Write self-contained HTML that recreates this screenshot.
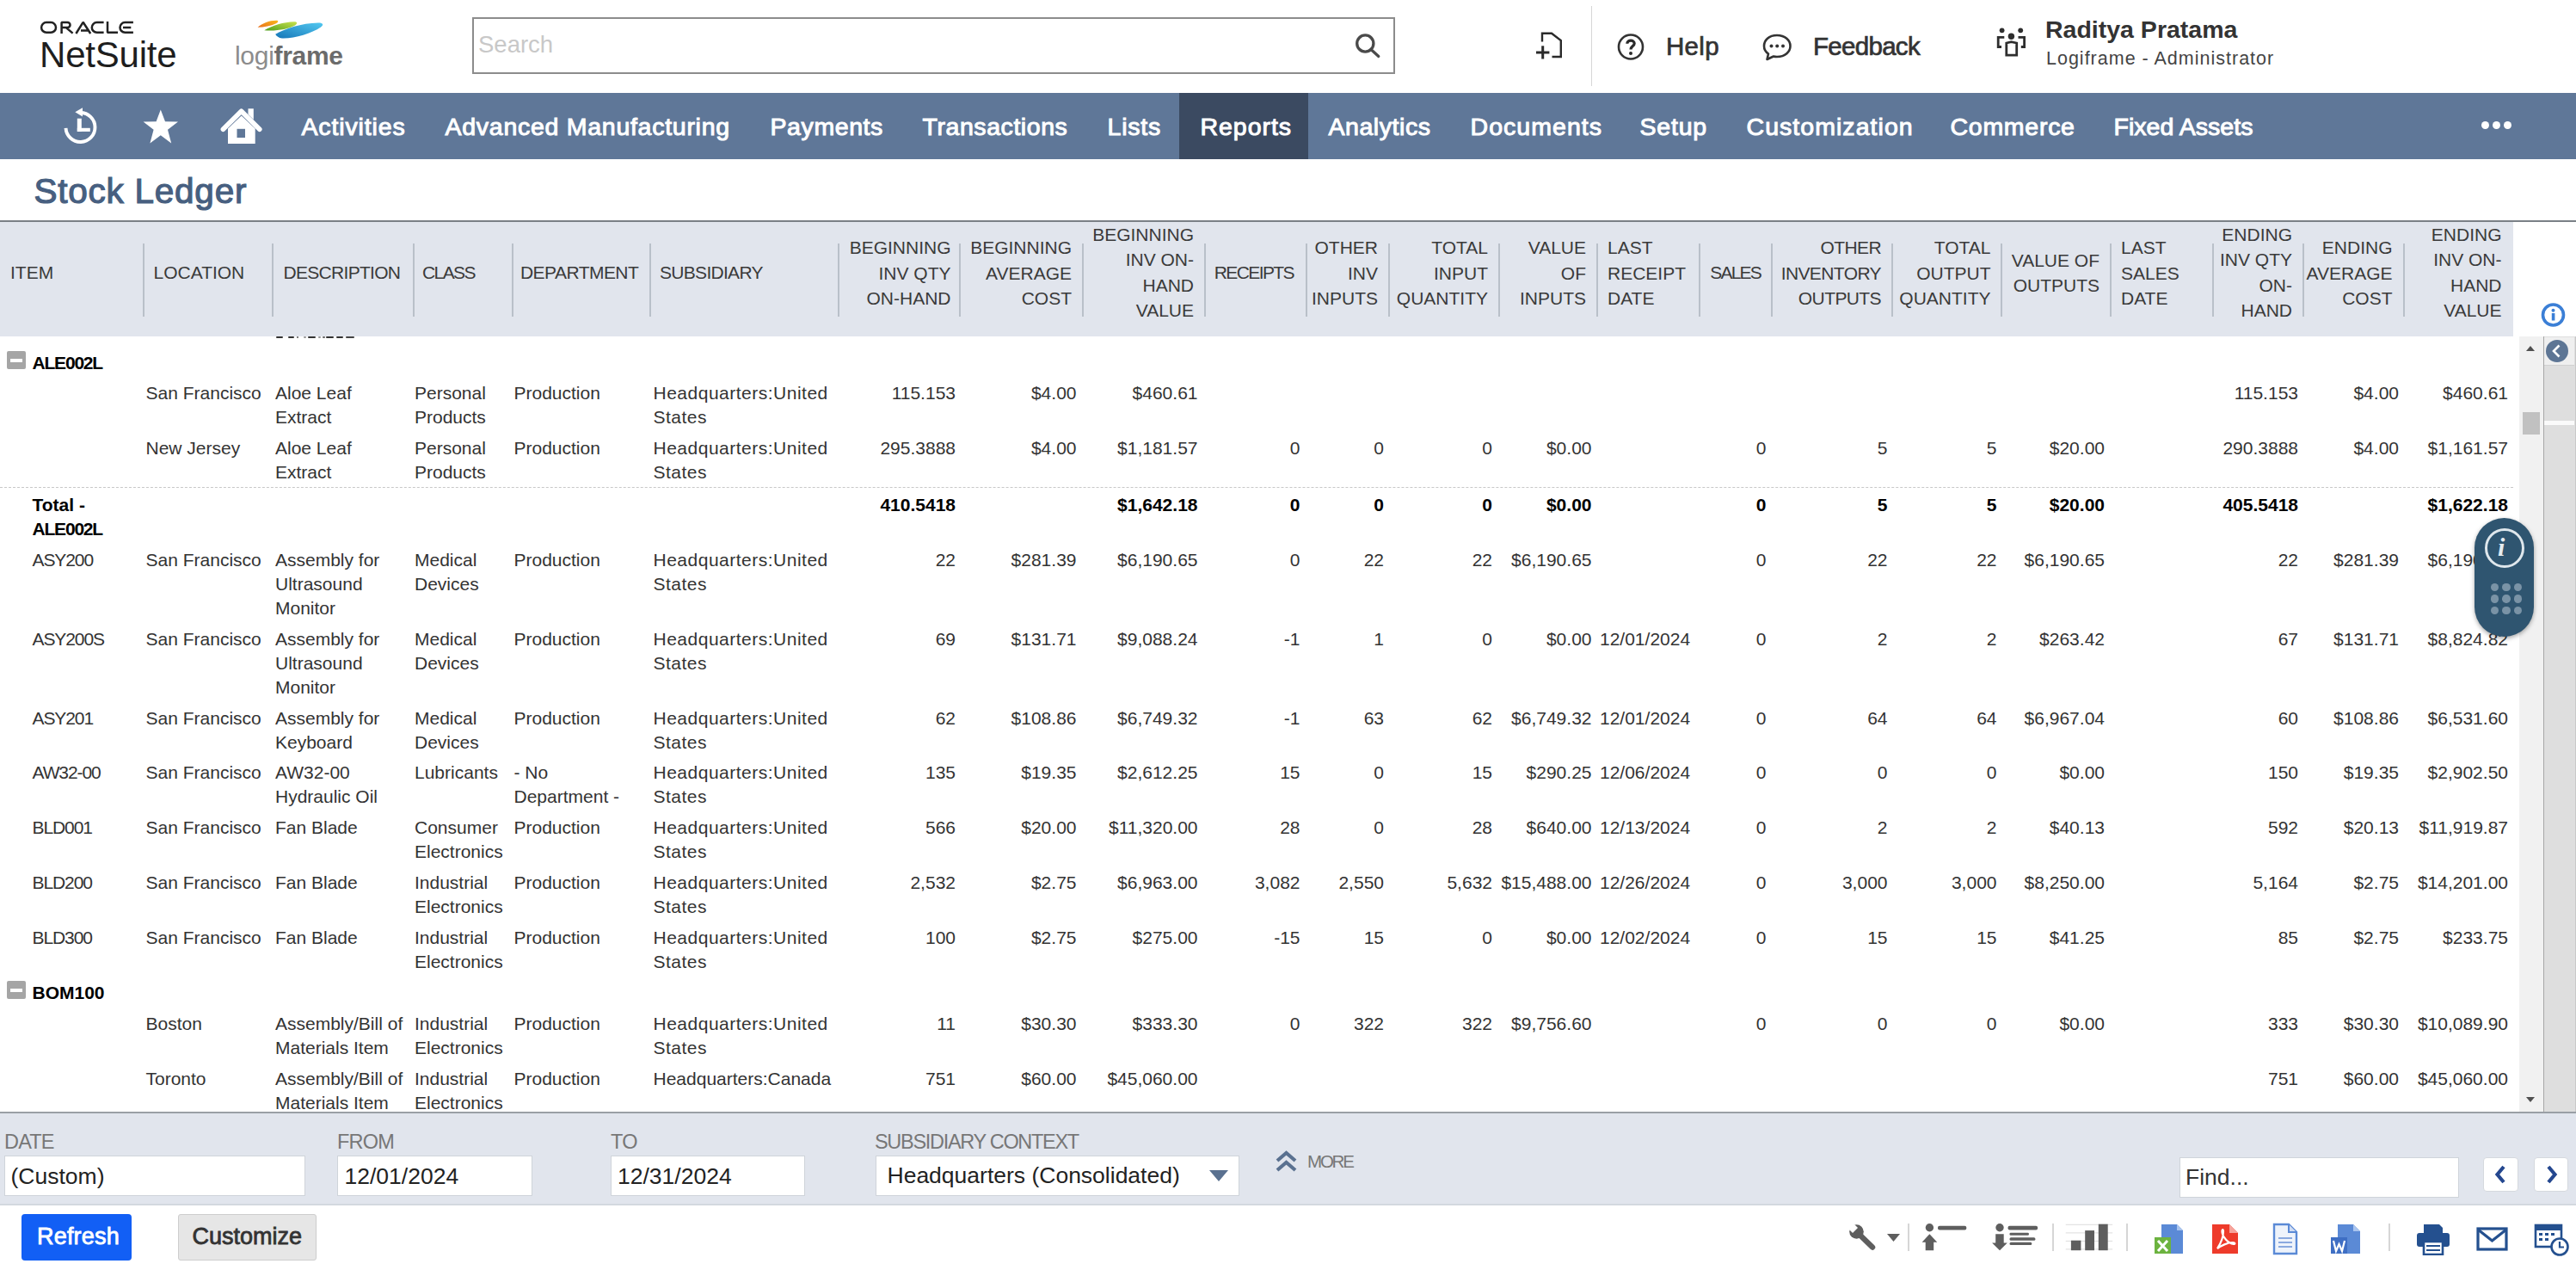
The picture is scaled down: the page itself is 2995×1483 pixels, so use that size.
<!DOCTYPE html>
<html><head><meta charset="utf-8"><style>html,body{margin:0;padding:0;}body{width:2995px;height:1483px;overflow:hidden;position:relative;background:#fff;}</style></head><body><svg style="position:absolute;left:46px;top:24px" width="112" height="17" viewBox="0 0 112 17">
<g fill="none" stroke="#222" stroke-width="2.5" stroke-linejoin="bevel">
<rect x="2.1" y="2.1" width="16.9" height="11.6" rx="5.8" ry="5.8"/>
<path d="M25.6 15 V2.1 H32.5 A3 3 0 0 1 32.5 8.1 H25.6 M30.8 8.1 L38.6 14.6"/>
<path d="M42.4 15 L50.6 1.8 L59.2 15 M48 11.6 H56.3"/>
<path d="M74.6 2.1 H66.6 A5.8 5.8 0 0 0 66.6 13.7 H74.6"/>
<path d="M79 1 V13.7 H91"/>
<path d="M108.9 2.1 H99.3 A5.8 5.8 0 0 0 99.3 13.7 H108.9 M97 7.9 H106.3"/>
</g>
</svg>
<div style="position:absolute;left:46px;top:36.34px;font:normal 42px/55px 'Liberation Sans', sans-serif;color:#1e1e1e;white-space:nowrap;letter-spacing:-0.2px;">NetSuite</div>
<svg style="position:absolute;left:290px;top:18px" width="90" height="30" viewBox="0 0 90 30">
<defs>
<linearGradient id="go" x1="0" y1="1" x2="1" y2="0"><stop offset="0" stop-color="#e8701f"/><stop offset="1" stop-color="#f9b71b"/></linearGradient>
<linearGradient id="gg" x1="0" y1="1" x2="1" y2="0"><stop offset="0" stop-color="#4f9e1c"/><stop offset="1" stop-color="#cbe24c"/></linearGradient>
<linearGradient id="gb" x1="0" y1="1" x2="1" y2="0"><stop offset="0" stop-color="#1676b8"/><stop offset="1" stop-color="#52c8f0"/></linearGradient>
</defs>
<path d="M9.6 13.8 C15 9 24 5.5 32 5.8 C34 6 33.5 8 31 9.2 C25 12 17 13.8 9.6 13.8 Z" fill="url(#go)"/>
<path d="M17.3 17.2 C26 12 40 7.5 52 7.3 C56 7.2 56 9.5 53 11.5 C45 16 30 18.5 17.3 17.2 Z" fill="url(#gg)"/>
<path d="M30.2 21.8 C42 15 60 9 80 8.5 C86 8.4 86.5 11 83 13.5 C72 21 52 27 38 26.5 C34 26.3 31.5 24 30.2 21.8 Z" fill="url(#gb)"/>
</svg>
<div style="position:absolute;left:273px;top:45.25px;font:bold 30px/39px 'Liberation Sans', sans-serif;color:#222;white-space:nowrap;letter-spacing:-0.3px"><span style="font-weight:normal;color:#8c8c8c">logi</span><span style="color:#6b6b6b">frame</span></div>
<div style="position:absolute;left:549px;top:20px;width:1072.5px;height:65.5px;box-sizing:border-box;border:2px solid #8c8c8c;background:#fff"></div>
<div style="position:absolute;left:556px;top:34.09px;font:normal 27.5px/36px 'Liberation Sans', sans-serif;color:#c8c8c8;white-space:nowrap;">Search</div>
<svg style="position:absolute;left:1574px;top:39px" width="32" height="31" viewBox="0 0 32 31">
<circle cx="13.3" cy="11.5" r="9.6" fill="none" stroke="#4a4a4a" stroke-width="3.3"/>
<line x1="20" y1="18.5" x2="28.8" y2="26.5" stroke="#4a4a4a" stroke-width="3.2" stroke-linecap="round"/>
</svg>
<svg style="position:absolute;left:1784px;top:37px" width="36" height="34" viewBox="0 0 36 34">
<path d="M9 11.5 V1.8 H20 L30.8 10 V29 H20.5" fill="none" stroke="#2a2a2a" stroke-width="2.4" stroke-linejoin="miter"/>
<line x1="2" y1="24" x2="17.4" y2="24" stroke="#2a2a2a" stroke-width="3"/>
<line x1="9.7" y1="16.3" x2="9.7" y2="31.5" stroke="#2a2a2a" stroke-width="3"/>
</svg>
<div style="position:absolute;left:1849.5px;top:7px;width:1.2px;height:93px;background:#d6d6d6"></div>
<svg style="position:absolute;left:1880px;top:39px" width="34" height="31" viewBox="0 0 34 31">
<circle cx="16" cy="15.5" r="14" fill="none" stroke="#333" stroke-width="2.6"/>
<path d="M11.8 11.8 C11.8 7 20.2 7 20.2 11.5 C20.2 14.5 16 14.5 16 18.5" fill="none" stroke="#2a2a2a" stroke-width="3.2"/>
<circle cx="16" cy="23" r="2" fill="#2a2a2a"/>
</svg>
<div style="position:absolute;left:1937px;top:35.37px;font:normal 29.5px/38px 'Liberation Sans', sans-serif;color:#333;white-space:nowrap;-webkit-text-stroke:0.7px #333;letter-spacing:0.3px">Help</div>
<svg style="position:absolute;left:2048px;top:38px" width="38" height="34" viewBox="0 0 38 34">
<path d="M18 3 C8.5 3 3 9 3 15.5 C3 19.5 5 22.5 8 24.5 L6.5 31 L14 27.5 C15.3 27.9 16.6 28 18 28 C27.5 28 33.5 22 33.5 15.5 C33.5 9 27.5 3 18 3 Z" fill="none" stroke="#333" stroke-width="2.6" stroke-linejoin="round"/>
<circle cx="11.5" cy="15.5" r="2" fill="#333"/><circle cx="18.2" cy="15.5" r="2" fill="#333"/><circle cx="25" cy="15.5" r="2" fill="#333"/>
</svg>
<div style="position:absolute;left:2108px;top:35.37px;font:normal 29.5px/38px 'Liberation Sans', sans-serif;color:#333;white-space:nowrap;-webkit-text-stroke:0.7px #333;letter-spacing:-0.7px">Feedback</div>
<svg style="position:absolute;left:2319px;top:31px" width="39" height="36" viewBox="0 0 39 36">
<circle cx="8.6" cy="4.3" r="2.9" fill="#2e2e2e"/><circle cx="30.2" cy="4.3" r="2.9" fill="#2e2e2e"/>
<circle cx="19.4" cy="11.3" r="3.7" fill="#2e2e2e"/>
<path d="M11.3 12.3 H4.2 V23.5 H8" fill="none" stroke="#2e2e2e" stroke-width="2.8"/>
<path d="M27.5 12.3 H34.6 V23.5 H30.8" fill="none" stroke="#2e2e2e" stroke-width="2.8"/>
<path d="M13.8 19 L19.4 17.6 L25.7 19 V33.2 H13.8 Z" fill="none" stroke="#2e2e2e" stroke-width="2.8"/>
</svg>
<div style="position:absolute;left:2378px;top:15.73px;font:bold 28.5px/37px 'Liberation Sans', sans-serif;color:#333;white-space:nowrap;">Raditya Pratama</div>
<div style="position:absolute;left:2379px;top:53.64px;font:normal 21.5px/28px 'Liberation Sans', sans-serif;color:#444;white-space:nowrap;letter-spacing:1px">Logiframe - Administrator</div>
<div style="position:absolute;left:0px;top:108px;width:2995px;height:77px;background:#5f7798"></div>
<div style="position:absolute;left:1371px;top:108px;width:150px;height:77px;background:#3b4a61"></div>
<svg style="position:absolute;left:72px;top:124px" width="44" height="46" viewBox="0 0 44 46">
<path d="M21.5 7 A17 17 0 1 1 4.5 24.9" fill="none" stroke="#fff" stroke-width="3.9"/>
<path d="M15.3 6.3 L24 1.2 L24 11.4 Z" fill="#fff"/>
<rect x="17.8" y="13.7" width="5" height="15.2" fill="#fff"/>
<rect x="17.8" y="24.8" width="15" height="4.1" fill="#fff"/>
</svg>
<svg style="position:absolute;left:166px;top:127px" width="42" height="41" viewBox="0 0 42 41">
<path d="M20.8 0.5 L26 14.3 L41 14.5 L29 23.8 L33.2 39.5 L20.8 30.3 L8.4 39.5 L12.6 23.8 L0.6 14.5 L15.6 14.3 Z" fill="#fff"/>
</svg>
<svg style="position:absolute;left:256px;top:124px" width="50" height="45" viewBox="0 0 50 45">
<path d="M32.5 2.2 H38.8 V15 L32.5 8.8 Z" fill="#fff"/>
<path d="M9 25.5 L24.7 10.5 L40.7 25.5 V43 H9 Z" fill="#fff"/>
<path d="M3.4 26.3 L24.6 5.3 L45.8 26.3" fill="none" stroke="#fff" stroke-width="5.6" stroke-linecap="round" stroke-linejoin="round"/>
<rect x="19.5" y="25.8" width="9.5" height="10.2" fill="#5f7798"/>
</svg>
<div style="position:absolute;left:350.5px;top:128.73px;font:normal 28.5px/37px 'Liberation Sans', sans-serif;color:#fff;white-space:nowrap;-webkit-text-stroke:1px #fff;letter-spacing:0.86px">Activities</div>
<div style="position:absolute;left:517.5px;top:128.73px;font:normal 28.5px/37px 'Liberation Sans', sans-serif;color:#fff;white-space:nowrap;-webkit-text-stroke:1px #fff;letter-spacing:0.73px">Advanced Manufacturing</div>
<div style="position:absolute;left:895.5px;top:128.73px;font:normal 28.5px/37px 'Liberation Sans', sans-serif;color:#fff;white-space:nowrap;-webkit-text-stroke:1px #fff;letter-spacing:0.59px">Payments</div>
<div style="position:absolute;left:1072.5px;top:128.73px;font:normal 28.5px/37px 'Liberation Sans', sans-serif;color:#fff;white-space:nowrap;-webkit-text-stroke:1px #fff;letter-spacing:0.57px">Transactions</div>
<div style="position:absolute;left:1287.5px;top:128.73px;font:normal 28.5px/37px 'Liberation Sans', sans-serif;color:#fff;white-space:nowrap;-webkit-text-stroke:1px #fff;letter-spacing:0.80px">Lists</div>
<div style="position:absolute;left:1395.5px;top:128.73px;font:normal 28.5px/37px 'Liberation Sans', sans-serif;color:#fff;white-space:nowrap;-webkit-text-stroke:1px #fff;letter-spacing:0.97px">Reports</div>
<div style="position:absolute;left:1544.5px;top:128.73px;font:normal 28.5px/37px 'Liberation Sans', sans-serif;color:#fff;white-space:nowrap;-webkit-text-stroke:1px #fff;letter-spacing:0.55px">Analytics</div>
<div style="position:absolute;left:1709.5px;top:128.73px;font:normal 28.5px/37px 'Liberation Sans', sans-serif;color:#fff;white-space:nowrap;-webkit-text-stroke:1px #fff;letter-spacing:1.05px">Documents</div>
<div style="position:absolute;left:1906.5px;top:128.73px;font:normal 28.5px/37px 'Liberation Sans', sans-serif;color:#fff;white-space:nowrap;-webkit-text-stroke:1px #fff;letter-spacing:0.80px">Setup</div>
<div style="position:absolute;left:2030.5px;top:128.73px;font:normal 28.5px/37px 'Liberation Sans', sans-serif;color:#fff;white-space:nowrap;-webkit-text-stroke:1px #fff;letter-spacing:1.05px">Customization</div>
<div style="position:absolute;left:2267.5px;top:128.73px;font:normal 28.5px/37px 'Liberation Sans', sans-serif;color:#fff;white-space:nowrap;-webkit-text-stroke:1px #fff;letter-spacing:0.73px">Commerce</div>
<div style="position:absolute;left:2457.5px;top:128.73px;font:normal 28.5px/37px 'Liberation Sans', sans-serif;color:#fff;white-space:nowrap;-webkit-text-stroke:1px #fff;letter-spacing:0.03px">Fixed Assets</div>
<div style="position:absolute;left:2885px;top:141px;width:9px;height:9px;border-radius:50%;background:#fff"></div>
<div style="position:absolute;left:2898px;top:141px;width:9px;height:9px;border-radius:50%;background:#fff"></div>
<div style="position:absolute;left:2911px;top:141px;width:9px;height:9px;border-radius:50%;background:#fff"></div>
<div style="position:absolute;left:39.5px;top:196.33px;font:normal 40.5px/53px 'Liberation Sans', sans-serif;color:#475f80;white-space:nowrap;-webkit-text-stroke:1.2px #475f80;letter-spacing:0.75px">Stock Ledger</div>
<div style="position:absolute;left:0px;top:255.5px;width:2995px;height:2px;background:#7a8086"></div>
<div style="position:absolute;left:0px;top:257.5px;width:2922px;height:133.5px;background:#e1e5ed"></div>
<div style="position:absolute;left:165.5px;top:282.5px;width:2px;height:85px;background:#b9c0c9"></div>
<div style="position:absolute;left:316px;top:282.5px;width:2px;height:85px;background:#b9c0c9"></div>
<div style="position:absolute;left:479.5px;top:282.5px;width:2px;height:85px;background:#b9c0c9"></div>
<div style="position:absolute;left:594.5px;top:282.5px;width:2px;height:85px;background:#b9c0c9"></div>
<div style="position:absolute;left:754.5px;top:282.5px;width:2px;height:85px;background:#b9c0c9"></div>
<div style="position:absolute;left:974px;top:282.5px;width:2px;height:85px;background:#b9c0c9"></div>
<div style="position:absolute;left:1114.5px;top:282.5px;width:2px;height:85px;background:#b9c0c9"></div>
<div style="position:absolute;left:1257.5px;top:282.5px;width:2px;height:85px;background:#b9c0c9"></div>
<div style="position:absolute;left:1400px;top:282.5px;width:2px;height:85px;background:#b9c0c9"></div>
<div style="position:absolute;left:1517.5px;top:282.5px;width:2px;height:85px;background:#b9c0c9"></div>
<div style="position:absolute;left:1613.5px;top:282.5px;width:2px;height:85px;background:#b9c0c9"></div>
<div style="position:absolute;left:1741.5px;top:282.5px;width:2px;height:85px;background:#b9c0c9"></div>
<div style="position:absolute;left:1855.5px;top:282.5px;width:2px;height:85px;background:#b9c0c9"></div>
<div style="position:absolute;left:1974.5px;top:282.5px;width:2px;height:85px;background:#b9c0c9"></div>
<div style="position:absolute;left:2058.5px;top:282.5px;width:2px;height:85px;background:#b9c0c9"></div>
<div style="position:absolute;left:2199px;top:282.5px;width:2px;height:85px;background:#b9c0c9"></div>
<div style="position:absolute;left:2326px;top:282.5px;width:2px;height:85px;background:#b9c0c9"></div>
<div style="position:absolute;left:2453px;top:282.5px;width:2px;height:85px;background:#b9c0c9"></div>
<div style="position:absolute;left:2571.5px;top:282.5px;width:2px;height:85px;background:#b9c0c9"></div>
<div style="position:absolute;left:2677px;top:282.5px;width:2px;height:85px;background:#b9c0c9"></div>
<div style="position:absolute;left:2794px;top:282.5px;width:2px;height:85px;background:#b9c0c9"></div>
<div style="position:absolute;left:12px;top:302.42px;font:normal 21px/29.5px 'Liberation Sans', sans-serif;color:#3a3a3a;white-space:nowrap;letter-spacing:0px">ITEM</div>
<div style="position:absolute;left:178.5px;top:302.42px;font:normal 21px/29.5px 'Liberation Sans', sans-serif;color:#3a3a3a;white-space:nowrap;letter-spacing:0px">LOCATION</div>
<div style="position:absolute;left:329.5px;top:302.42px;font:normal 21px/29.5px 'Liberation Sans', sans-serif;color:#3a3a3a;white-space:nowrap;letter-spacing:-0.7px">DESCRIPTION</div>
<div style="position:absolute;left:491px;top:302.42px;font:normal 21px/29.5px 'Liberation Sans', sans-serif;color:#3a3a3a;white-space:nowrap;letter-spacing:-1.6px">CLASS</div>
<div style="position:absolute;left:605px;top:302.42px;font:normal 21px/29.5px 'Liberation Sans', sans-serif;color:#3a3a3a;white-space:nowrap;letter-spacing:-0.55px">DEPARTMENT</div>
<div style="position:absolute;left:767px;top:302.42px;font:normal 21px/29.5px 'Liberation Sans', sans-serif;color:#3a3a3a;white-space:nowrap;letter-spacing:-0.7px">SUBSIDIARY</div>
<div style="position:absolute;right:1889.5px;text-align:right;top:273.42px;font:normal 21px/29.5px 'Liberation Sans', sans-serif;color:#3a3a3a;white-space:nowrap;letter-spacing:0px">BEGINNING<br>INV QTY<br>ON-HAND</div>
<div style="position:absolute;right:1749px;text-align:right;top:273.42px;font:normal 21px/29.5px 'Liberation Sans', sans-serif;color:#3a3a3a;white-space:nowrap;letter-spacing:0px">BEGINNING<br>AVERAGE<br>COST</div>
<div style="position:absolute;right:1607px;text-align:right;top:257.92px;font:normal 21px/29.5px 'Liberation Sans', sans-serif;color:#3a3a3a;white-space:nowrap;letter-spacing:0px">BEGINNING<br>INV ON-<br>HAND<br>VALUE</div>
<div style="position:absolute;right:1491px;text-align:right;top:302.42px;font:normal 21px/29.5px 'Liberation Sans', sans-serif;color:#3a3a3a;white-space:nowrap;letter-spacing:-1.6px">RECEIPTS</div>
<div style="position:absolute;right:1393px;text-align:right;top:273.42px;font:normal 21px/29.5px 'Liberation Sans', sans-serif;color:#3a3a3a;white-space:nowrap;letter-spacing:0px">OTHER<br>INV<br>INPUTS</div>
<div style="position:absolute;right:1265px;text-align:right;top:273.42px;font:normal 21px/29.5px 'Liberation Sans', sans-serif;color:#3a3a3a;white-space:nowrap;letter-spacing:0px">TOTAL<br>INPUT<br>QUANTITY</div>
<div style="position:absolute;right:1151px;text-align:right;top:273.42px;font:normal 21px/29.5px 'Liberation Sans', sans-serif;color:#3a3a3a;white-space:nowrap;letter-spacing:0px">VALUE<br>OF<br>INPUTS</div>
<div style="position:absolute;left:1869px;top:273.42px;font:normal 21px/29.5px 'Liberation Sans', sans-serif;color:#3a3a3a;white-space:nowrap;letter-spacing:0px">LAST<br>RECEIPT<br>DATE</div>
<div style="position:absolute;right:948px;text-align:right;top:302.42px;font:normal 21px/29.5px 'Liberation Sans', sans-serif;color:#3a3a3a;white-space:nowrap;letter-spacing:-1.8px">SALES</div>
<div style="position:absolute;right:808px;text-align:right;top:273.42px;font:normal 21px/29.5px 'Liberation Sans', sans-serif;color:#3a3a3a;white-space:nowrap;letter-spacing:-0.6px">OTHER<br>INVENTORY<br>OUTPUTS</div>
<div style="position:absolute;right:680.5px;text-align:right;top:273.42px;font:normal 21px/29.5px 'Liberation Sans', sans-serif;color:#3a3a3a;white-space:nowrap;letter-spacing:0px">TOTAL<br>OUTPUT<br>QUANTITY</div>
<div style="position:absolute;right:554px;text-align:right;top:287.92px;font:normal 21px/29.5px 'Liberation Sans', sans-serif;color:#3a3a3a;white-space:nowrap;letter-spacing:0px">VALUE OF<br>OUTPUTS</div>
<div style="position:absolute;left:2466px;top:273.42px;font:normal 21px/29.5px 'Liberation Sans', sans-serif;color:#3a3a3a;white-space:nowrap;letter-spacing:0px">LAST<br>SALES<br>DATE</div>
<div style="position:absolute;right:330px;text-align:right;top:257.92px;font:normal 21px/29.5px 'Liberation Sans', sans-serif;color:#3a3a3a;white-space:nowrap;letter-spacing:0px">ENDING<br>INV QTY<br>ON-<br>HAND</div>
<div style="position:absolute;right:213.5px;text-align:right;top:273.42px;font:normal 21px/29.5px 'Liberation Sans', sans-serif;color:#3a3a3a;white-space:nowrap;letter-spacing:0px">ENDING<br>AVERAGE<br>COST</div>
<div style="position:absolute;right:86.5px;text-align:right;top:257.92px;font:normal 21px/29.5px 'Liberation Sans', sans-serif;color:#3a3a3a;white-space:nowrap;letter-spacing:0px">ENDING<br>INV ON-<br>HAND<br>VALUE</div>
<div style="position:absolute;left:0;top:391px;width:2929px;height:901px;overflow:hidden">
<div style="position:absolute;left:169.5px;top:52.17px;font:normal 21px/28px 'Liberation Sans', sans-serif;color:#333333;white-space:nowrap;letter-spacing:0px">San Francisco</div>
<div style="position:absolute;left:320px;top:52.17px;font:normal 21px/28px 'Liberation Sans', sans-serif;color:#333333;white-space:nowrap;letter-spacing:0px">Aloe Leaf<br>Extract</div>
<div style="position:absolute;left:482px;top:52.17px;font:normal 21px/28px 'Liberation Sans', sans-serif;color:#333333;white-space:nowrap;letter-spacing:0px">Personal<br>Products</div>
<div style="position:absolute;left:597.5px;top:52.17px;font:normal 21px/28px 'Liberation Sans', sans-serif;color:#333333;white-space:nowrap;letter-spacing:0px">Production</div>
<div style="position:absolute;left:759.5px;top:52.17px;font:normal 21px/28px 'Liberation Sans', sans-serif;color:#333333;white-space:nowrap;letter-spacing:0.5px">Headquarters:United<br>States</div>
<div style="position:absolute;right:1818px;text-align:right;top:52.17px;font:normal 21px/28px 'Liberation Sans', sans-serif;color:#333333;white-space:nowrap;letter-spacing:0px">115.153</div>
<div style="position:absolute;right:1677.5px;text-align:right;top:52.17px;font:normal 21px/28px 'Liberation Sans', sans-serif;color:#333333;white-space:nowrap;letter-spacing:0px">$4.00</div>
<div style="position:absolute;right:1536.5px;text-align:right;top:52.17px;font:normal 21px/28px 'Liberation Sans', sans-serif;color:#333333;white-space:nowrap;letter-spacing:0px">$460.61</div>
<div style="position:absolute;right:257px;text-align:right;top:52.17px;font:normal 21px/28px 'Liberation Sans', sans-serif;color:#333333;white-space:nowrap;letter-spacing:0px">115.153</div>
<div style="position:absolute;right:140px;text-align:right;top:52.17px;font:normal 21px/28px 'Liberation Sans', sans-serif;color:#333333;white-space:nowrap;letter-spacing:0px">$4.00</div>
<div style="position:absolute;right:13px;text-align:right;top:52.17px;font:normal 21px/28px 'Liberation Sans', sans-serif;color:#333333;white-space:nowrap;letter-spacing:0px">$460.61</div>
<div style="position:absolute;left:169.5px;top:116.17px;font:normal 21px/28px 'Liberation Sans', sans-serif;color:#333333;white-space:nowrap;letter-spacing:0px">New Jersey</div>
<div style="position:absolute;left:320px;top:116.17px;font:normal 21px/28px 'Liberation Sans', sans-serif;color:#333333;white-space:nowrap;letter-spacing:0px">Aloe Leaf<br>Extract</div>
<div style="position:absolute;left:482px;top:116.17px;font:normal 21px/28px 'Liberation Sans', sans-serif;color:#333333;white-space:nowrap;letter-spacing:0px">Personal<br>Products</div>
<div style="position:absolute;left:597.5px;top:116.17px;font:normal 21px/28px 'Liberation Sans', sans-serif;color:#333333;white-space:nowrap;letter-spacing:0px">Production</div>
<div style="position:absolute;left:759.5px;top:116.17px;font:normal 21px/28px 'Liberation Sans', sans-serif;color:#333333;white-space:nowrap;letter-spacing:0.5px">Headquarters:United<br>States</div>
<div style="position:absolute;right:1818px;text-align:right;top:116.17px;font:normal 21px/28px 'Liberation Sans', sans-serif;color:#333333;white-space:nowrap;letter-spacing:0px">295.3888</div>
<div style="position:absolute;right:1677.5px;text-align:right;top:116.17px;font:normal 21px/28px 'Liberation Sans', sans-serif;color:#333333;white-space:nowrap;letter-spacing:0px">$4.00</div>
<div style="position:absolute;right:1536.5px;text-align:right;top:116.17px;font:normal 21px/28px 'Liberation Sans', sans-serif;color:#333333;white-space:nowrap;letter-spacing:0px">$1,181.57</div>
<div style="position:absolute;right:1417.5px;text-align:right;top:116.17px;font:normal 21px/28px 'Liberation Sans', sans-serif;color:#333333;white-space:nowrap;letter-spacing:0px">0</div>
<div style="position:absolute;right:1320px;text-align:right;top:116.17px;font:normal 21px/28px 'Liberation Sans', sans-serif;color:#333333;white-space:nowrap;letter-spacing:0px">0</div>
<div style="position:absolute;right:1194px;text-align:right;top:116.17px;font:normal 21px/28px 'Liberation Sans', sans-serif;color:#333333;white-space:nowrap;letter-spacing:0px">0</div>
<div style="position:absolute;right:1078.5px;text-align:right;top:116.17px;font:normal 21px/28px 'Liberation Sans', sans-serif;color:#333333;white-space:nowrap;letter-spacing:0px">$0.00</div>
<div style="position:absolute;right:875.5px;text-align:right;top:116.17px;font:normal 21px/28px 'Liberation Sans', sans-serif;color:#333333;white-space:nowrap;letter-spacing:0px">0</div>
<div style="position:absolute;right:734.5px;text-align:right;top:116.17px;font:normal 21px/28px 'Liberation Sans', sans-serif;color:#333333;white-space:nowrap;letter-spacing:0px">5</div>
<div style="position:absolute;right:607.5px;text-align:right;top:116.17px;font:normal 21px/28px 'Liberation Sans', sans-serif;color:#333333;white-space:nowrap;letter-spacing:0px">5</div>
<div style="position:absolute;right:482px;text-align:right;top:116.17px;font:normal 21px/28px 'Liberation Sans', sans-serif;color:#333333;white-space:nowrap;letter-spacing:0px">$20.00</div>
<div style="position:absolute;right:257px;text-align:right;top:116.17px;font:normal 21px/28px 'Liberation Sans', sans-serif;color:#333333;white-space:nowrap;letter-spacing:0px">290.3888</div>
<div style="position:absolute;right:140px;text-align:right;top:116.17px;font:normal 21px/28px 'Liberation Sans', sans-serif;color:#333333;white-space:nowrap;letter-spacing:0px">$4.00</div>
<div style="position:absolute;right:13px;text-align:right;top:116.17px;font:normal 21px/28px 'Liberation Sans', sans-serif;color:#333333;white-space:nowrap;letter-spacing:0px">$1,161.57</div>
<div style="position:absolute;left:37.5px;top:246.17px;font:normal 21px/28px 'Liberation Sans', sans-serif;color:#333333;white-space:nowrap;letter-spacing:-1.1px">ASY200</div>
<div style="position:absolute;left:169.5px;top:246.17px;font:normal 21px/28px 'Liberation Sans', sans-serif;color:#333333;white-space:nowrap;letter-spacing:0px">San Francisco</div>
<div style="position:absolute;left:320px;top:246.17px;font:normal 21px/28px 'Liberation Sans', sans-serif;color:#333333;white-space:nowrap;letter-spacing:0px">Assembly for<br>Ultrasound<br>Monitor</div>
<div style="position:absolute;left:482px;top:246.17px;font:normal 21px/28px 'Liberation Sans', sans-serif;color:#333333;white-space:nowrap;letter-spacing:0px">Medical<br>Devices</div>
<div style="position:absolute;left:597.5px;top:246.17px;font:normal 21px/28px 'Liberation Sans', sans-serif;color:#333333;white-space:nowrap;letter-spacing:0px">Production</div>
<div style="position:absolute;left:759.5px;top:246.17px;font:normal 21px/28px 'Liberation Sans', sans-serif;color:#333333;white-space:nowrap;letter-spacing:0.5px">Headquarters:United<br>States</div>
<div style="position:absolute;right:1818px;text-align:right;top:246.17px;font:normal 21px/28px 'Liberation Sans', sans-serif;color:#333333;white-space:nowrap;letter-spacing:0px">22</div>
<div style="position:absolute;right:1677.5px;text-align:right;top:246.17px;font:normal 21px/28px 'Liberation Sans', sans-serif;color:#333333;white-space:nowrap;letter-spacing:0px">$281.39</div>
<div style="position:absolute;right:1536.5px;text-align:right;top:246.17px;font:normal 21px/28px 'Liberation Sans', sans-serif;color:#333333;white-space:nowrap;letter-spacing:0px">$6,190.65</div>
<div style="position:absolute;right:1417.5px;text-align:right;top:246.17px;font:normal 21px/28px 'Liberation Sans', sans-serif;color:#333333;white-space:nowrap;letter-spacing:0px">0</div>
<div style="position:absolute;right:1320px;text-align:right;top:246.17px;font:normal 21px/28px 'Liberation Sans', sans-serif;color:#333333;white-space:nowrap;letter-spacing:0px">22</div>
<div style="position:absolute;right:1194px;text-align:right;top:246.17px;font:normal 21px/28px 'Liberation Sans', sans-serif;color:#333333;white-space:nowrap;letter-spacing:0px">22</div>
<div style="position:absolute;right:1078.5px;text-align:right;top:246.17px;font:normal 21px/28px 'Liberation Sans', sans-serif;color:#333333;white-space:nowrap;letter-spacing:0px">$6,190.65</div>
<div style="position:absolute;right:875.5px;text-align:right;top:246.17px;font:normal 21px/28px 'Liberation Sans', sans-serif;color:#333333;white-space:nowrap;letter-spacing:0px">0</div>
<div style="position:absolute;right:734.5px;text-align:right;top:246.17px;font:normal 21px/28px 'Liberation Sans', sans-serif;color:#333333;white-space:nowrap;letter-spacing:0px">22</div>
<div style="position:absolute;right:607.5px;text-align:right;top:246.17px;font:normal 21px/28px 'Liberation Sans', sans-serif;color:#333333;white-space:nowrap;letter-spacing:0px">22</div>
<div style="position:absolute;right:482px;text-align:right;top:246.17px;font:normal 21px/28px 'Liberation Sans', sans-serif;color:#333333;white-space:nowrap;letter-spacing:0px">$6,190.65</div>
<div style="position:absolute;right:257px;text-align:right;top:246.17px;font:normal 21px/28px 'Liberation Sans', sans-serif;color:#333333;white-space:nowrap;letter-spacing:0px">22</div>
<div style="position:absolute;right:140px;text-align:right;top:246.17px;font:normal 21px/28px 'Liberation Sans', sans-serif;color:#333333;white-space:nowrap;letter-spacing:0px">$281.39</div>
<div style="position:absolute;right:13px;text-align:right;top:246.17px;font:normal 21px/28px 'Liberation Sans', sans-serif;color:#333333;white-space:nowrap;letter-spacing:0px">$6,190.65</div>
<div style="position:absolute;left:37.5px;top:338.17px;font:normal 21px/28px 'Liberation Sans', sans-serif;color:#333333;white-space:nowrap;letter-spacing:-1.1px">ASY200S</div>
<div style="position:absolute;left:169.5px;top:338.17px;font:normal 21px/28px 'Liberation Sans', sans-serif;color:#333333;white-space:nowrap;letter-spacing:0px">San Francisco</div>
<div style="position:absolute;left:320px;top:338.17px;font:normal 21px/28px 'Liberation Sans', sans-serif;color:#333333;white-space:nowrap;letter-spacing:0px">Assembly for<br>Ultrasound<br>Monitor</div>
<div style="position:absolute;left:482px;top:338.17px;font:normal 21px/28px 'Liberation Sans', sans-serif;color:#333333;white-space:nowrap;letter-spacing:0px">Medical<br>Devices</div>
<div style="position:absolute;left:597.5px;top:338.17px;font:normal 21px/28px 'Liberation Sans', sans-serif;color:#333333;white-space:nowrap;letter-spacing:0px">Production</div>
<div style="position:absolute;left:759.5px;top:338.17px;font:normal 21px/28px 'Liberation Sans', sans-serif;color:#333333;white-space:nowrap;letter-spacing:0.5px">Headquarters:United<br>States</div>
<div style="position:absolute;right:1818px;text-align:right;top:338.17px;font:normal 21px/28px 'Liberation Sans', sans-serif;color:#333333;white-space:nowrap;letter-spacing:0px">69</div>
<div style="position:absolute;right:1677.5px;text-align:right;top:338.17px;font:normal 21px/28px 'Liberation Sans', sans-serif;color:#333333;white-space:nowrap;letter-spacing:0px">$131.71</div>
<div style="position:absolute;right:1536.5px;text-align:right;top:338.17px;font:normal 21px/28px 'Liberation Sans', sans-serif;color:#333333;white-space:nowrap;letter-spacing:0px">$9,088.24</div>
<div style="position:absolute;right:1417.5px;text-align:right;top:338.17px;font:normal 21px/28px 'Liberation Sans', sans-serif;color:#333333;white-space:nowrap;letter-spacing:0px">-1</div>
<div style="position:absolute;right:1320px;text-align:right;top:338.17px;font:normal 21px/28px 'Liberation Sans', sans-serif;color:#333333;white-space:nowrap;letter-spacing:0px">1</div>
<div style="position:absolute;right:1194px;text-align:right;top:338.17px;font:normal 21px/28px 'Liberation Sans', sans-serif;color:#333333;white-space:nowrap;letter-spacing:0px">0</div>
<div style="position:absolute;right:1078.5px;text-align:right;top:338.17px;font:normal 21px/28px 'Liberation Sans', sans-serif;color:#333333;white-space:nowrap;letter-spacing:0px">$0.00</div>
<div style="position:absolute;left:1860px;top:338.17px;font:normal 21px/28px 'Liberation Sans', sans-serif;color:#333333;white-space:nowrap;letter-spacing:0px">12/01/2024</div>
<div style="position:absolute;right:875.5px;text-align:right;top:338.17px;font:normal 21px/28px 'Liberation Sans', sans-serif;color:#333333;white-space:nowrap;letter-spacing:0px">0</div>
<div style="position:absolute;right:734.5px;text-align:right;top:338.17px;font:normal 21px/28px 'Liberation Sans', sans-serif;color:#333333;white-space:nowrap;letter-spacing:0px">2</div>
<div style="position:absolute;right:607.5px;text-align:right;top:338.17px;font:normal 21px/28px 'Liberation Sans', sans-serif;color:#333333;white-space:nowrap;letter-spacing:0px">2</div>
<div style="position:absolute;right:482px;text-align:right;top:338.17px;font:normal 21px/28px 'Liberation Sans', sans-serif;color:#333333;white-space:nowrap;letter-spacing:0px">$263.42</div>
<div style="position:absolute;right:257px;text-align:right;top:338.17px;font:normal 21px/28px 'Liberation Sans', sans-serif;color:#333333;white-space:nowrap;letter-spacing:0px">67</div>
<div style="position:absolute;right:140px;text-align:right;top:338.17px;font:normal 21px/28px 'Liberation Sans', sans-serif;color:#333333;white-space:nowrap;letter-spacing:0px">$131.71</div>
<div style="position:absolute;right:13px;text-align:right;top:338.17px;font:normal 21px/28px 'Liberation Sans', sans-serif;color:#333333;white-space:nowrap;letter-spacing:0px">$8,824.82</div>
<div style="position:absolute;left:37.5px;top:429.67px;font:normal 21px/28px 'Liberation Sans', sans-serif;color:#333333;white-space:nowrap;letter-spacing:-1.1px">ASY201</div>
<div style="position:absolute;left:169.5px;top:429.67px;font:normal 21px/28px 'Liberation Sans', sans-serif;color:#333333;white-space:nowrap;letter-spacing:0px">San Francisco</div>
<div style="position:absolute;left:320px;top:429.67px;font:normal 21px/28px 'Liberation Sans', sans-serif;color:#333333;white-space:nowrap;letter-spacing:0px">Assembly for<br>Keyboard</div>
<div style="position:absolute;left:482px;top:429.67px;font:normal 21px/28px 'Liberation Sans', sans-serif;color:#333333;white-space:nowrap;letter-spacing:0px">Medical<br>Devices</div>
<div style="position:absolute;left:597.5px;top:429.67px;font:normal 21px/28px 'Liberation Sans', sans-serif;color:#333333;white-space:nowrap;letter-spacing:0px">Production</div>
<div style="position:absolute;left:759.5px;top:429.67px;font:normal 21px/28px 'Liberation Sans', sans-serif;color:#333333;white-space:nowrap;letter-spacing:0.5px">Headquarters:United<br>States</div>
<div style="position:absolute;right:1818px;text-align:right;top:429.67px;font:normal 21px/28px 'Liberation Sans', sans-serif;color:#333333;white-space:nowrap;letter-spacing:0px">62</div>
<div style="position:absolute;right:1677.5px;text-align:right;top:429.67px;font:normal 21px/28px 'Liberation Sans', sans-serif;color:#333333;white-space:nowrap;letter-spacing:0px">$108.86</div>
<div style="position:absolute;right:1536.5px;text-align:right;top:429.67px;font:normal 21px/28px 'Liberation Sans', sans-serif;color:#333333;white-space:nowrap;letter-spacing:0px">$6,749.32</div>
<div style="position:absolute;right:1417.5px;text-align:right;top:429.67px;font:normal 21px/28px 'Liberation Sans', sans-serif;color:#333333;white-space:nowrap;letter-spacing:0px">-1</div>
<div style="position:absolute;right:1320px;text-align:right;top:429.67px;font:normal 21px/28px 'Liberation Sans', sans-serif;color:#333333;white-space:nowrap;letter-spacing:0px">63</div>
<div style="position:absolute;right:1194px;text-align:right;top:429.67px;font:normal 21px/28px 'Liberation Sans', sans-serif;color:#333333;white-space:nowrap;letter-spacing:0px">62</div>
<div style="position:absolute;right:1078.5px;text-align:right;top:429.67px;font:normal 21px/28px 'Liberation Sans', sans-serif;color:#333333;white-space:nowrap;letter-spacing:0px">$6,749.32</div>
<div style="position:absolute;left:1860px;top:429.67px;font:normal 21px/28px 'Liberation Sans', sans-serif;color:#333333;white-space:nowrap;letter-spacing:0px">12/01/2024</div>
<div style="position:absolute;right:875.5px;text-align:right;top:429.67px;font:normal 21px/28px 'Liberation Sans', sans-serif;color:#333333;white-space:nowrap;letter-spacing:0px">0</div>
<div style="position:absolute;right:734.5px;text-align:right;top:429.67px;font:normal 21px/28px 'Liberation Sans', sans-serif;color:#333333;white-space:nowrap;letter-spacing:0px">64</div>
<div style="position:absolute;right:607.5px;text-align:right;top:429.67px;font:normal 21px/28px 'Liberation Sans', sans-serif;color:#333333;white-space:nowrap;letter-spacing:0px">64</div>
<div style="position:absolute;right:482px;text-align:right;top:429.67px;font:normal 21px/28px 'Liberation Sans', sans-serif;color:#333333;white-space:nowrap;letter-spacing:0px">$6,967.04</div>
<div style="position:absolute;right:257px;text-align:right;top:429.67px;font:normal 21px/28px 'Liberation Sans', sans-serif;color:#333333;white-space:nowrap;letter-spacing:0px">60</div>
<div style="position:absolute;right:140px;text-align:right;top:429.67px;font:normal 21px/28px 'Liberation Sans', sans-serif;color:#333333;white-space:nowrap;letter-spacing:0px">$108.86</div>
<div style="position:absolute;right:13px;text-align:right;top:429.67px;font:normal 21px/28px 'Liberation Sans', sans-serif;color:#333333;white-space:nowrap;letter-spacing:0px">$6,531.60</div>
<div style="position:absolute;left:37.5px;top:493.17px;font:normal 21px/28px 'Liberation Sans', sans-serif;color:#333333;white-space:nowrap;letter-spacing:-1.1px">AW32-00</div>
<div style="position:absolute;left:169.5px;top:493.17px;font:normal 21px/28px 'Liberation Sans', sans-serif;color:#333333;white-space:nowrap;letter-spacing:0px">San Francisco</div>
<div style="position:absolute;left:320px;top:493.17px;font:normal 21px/28px 'Liberation Sans', sans-serif;color:#333333;white-space:nowrap;letter-spacing:0px">AW32-00<br>Hydraulic Oil</div>
<div style="position:absolute;left:482px;top:493.17px;font:normal 21px/28px 'Liberation Sans', sans-serif;color:#333333;white-space:nowrap;letter-spacing:0px">Lubricants</div>
<div style="position:absolute;left:597.5px;top:493.17px;font:normal 21px/28px 'Liberation Sans', sans-serif;color:#333333;white-space:nowrap;letter-spacing:0px">- No<br>Department -</div>
<div style="position:absolute;left:759.5px;top:493.17px;font:normal 21px/28px 'Liberation Sans', sans-serif;color:#333333;white-space:nowrap;letter-spacing:0.5px">Headquarters:United<br>States</div>
<div style="position:absolute;right:1818px;text-align:right;top:493.17px;font:normal 21px/28px 'Liberation Sans', sans-serif;color:#333333;white-space:nowrap;letter-spacing:0px">135</div>
<div style="position:absolute;right:1677.5px;text-align:right;top:493.17px;font:normal 21px/28px 'Liberation Sans', sans-serif;color:#333333;white-space:nowrap;letter-spacing:0px">$19.35</div>
<div style="position:absolute;right:1536.5px;text-align:right;top:493.17px;font:normal 21px/28px 'Liberation Sans', sans-serif;color:#333333;white-space:nowrap;letter-spacing:0px">$2,612.25</div>
<div style="position:absolute;right:1417.5px;text-align:right;top:493.17px;font:normal 21px/28px 'Liberation Sans', sans-serif;color:#333333;white-space:nowrap;letter-spacing:0px">15</div>
<div style="position:absolute;right:1320px;text-align:right;top:493.17px;font:normal 21px/28px 'Liberation Sans', sans-serif;color:#333333;white-space:nowrap;letter-spacing:0px">0</div>
<div style="position:absolute;right:1194px;text-align:right;top:493.17px;font:normal 21px/28px 'Liberation Sans', sans-serif;color:#333333;white-space:nowrap;letter-spacing:0px">15</div>
<div style="position:absolute;right:1078.5px;text-align:right;top:493.17px;font:normal 21px/28px 'Liberation Sans', sans-serif;color:#333333;white-space:nowrap;letter-spacing:0px">$290.25</div>
<div style="position:absolute;left:1860px;top:493.17px;font:normal 21px/28px 'Liberation Sans', sans-serif;color:#333333;white-space:nowrap;letter-spacing:0px">12/06/2024</div>
<div style="position:absolute;right:875.5px;text-align:right;top:493.17px;font:normal 21px/28px 'Liberation Sans', sans-serif;color:#333333;white-space:nowrap;letter-spacing:0px">0</div>
<div style="position:absolute;right:734.5px;text-align:right;top:493.17px;font:normal 21px/28px 'Liberation Sans', sans-serif;color:#333333;white-space:nowrap;letter-spacing:0px">0</div>
<div style="position:absolute;right:607.5px;text-align:right;top:493.17px;font:normal 21px/28px 'Liberation Sans', sans-serif;color:#333333;white-space:nowrap;letter-spacing:0px">0</div>
<div style="position:absolute;right:482px;text-align:right;top:493.17px;font:normal 21px/28px 'Liberation Sans', sans-serif;color:#333333;white-space:nowrap;letter-spacing:0px">$0.00</div>
<div style="position:absolute;right:257px;text-align:right;top:493.17px;font:normal 21px/28px 'Liberation Sans', sans-serif;color:#333333;white-space:nowrap;letter-spacing:0px">150</div>
<div style="position:absolute;right:140px;text-align:right;top:493.17px;font:normal 21px/28px 'Liberation Sans', sans-serif;color:#333333;white-space:nowrap;letter-spacing:0px">$19.35</div>
<div style="position:absolute;right:13px;text-align:right;top:493.17px;font:normal 21px/28px 'Liberation Sans', sans-serif;color:#333333;white-space:nowrap;letter-spacing:0px">$2,902.50</div>
<div style="position:absolute;left:37.5px;top:557.17px;font:normal 21px/28px 'Liberation Sans', sans-serif;color:#333333;white-space:nowrap;letter-spacing:-1.1px">BLD001</div>
<div style="position:absolute;left:169.5px;top:557.17px;font:normal 21px/28px 'Liberation Sans', sans-serif;color:#333333;white-space:nowrap;letter-spacing:0px">San Francisco</div>
<div style="position:absolute;left:320px;top:557.17px;font:normal 21px/28px 'Liberation Sans', sans-serif;color:#333333;white-space:nowrap;letter-spacing:0px">Fan Blade</div>
<div style="position:absolute;left:482px;top:557.17px;font:normal 21px/28px 'Liberation Sans', sans-serif;color:#333333;white-space:nowrap;letter-spacing:0px">Consumer<br>Electronics</div>
<div style="position:absolute;left:597.5px;top:557.17px;font:normal 21px/28px 'Liberation Sans', sans-serif;color:#333333;white-space:nowrap;letter-spacing:0px">Production</div>
<div style="position:absolute;left:759.5px;top:557.17px;font:normal 21px/28px 'Liberation Sans', sans-serif;color:#333333;white-space:nowrap;letter-spacing:0.5px">Headquarters:United<br>States</div>
<div style="position:absolute;right:1818px;text-align:right;top:557.17px;font:normal 21px/28px 'Liberation Sans', sans-serif;color:#333333;white-space:nowrap;letter-spacing:0px">566</div>
<div style="position:absolute;right:1677.5px;text-align:right;top:557.17px;font:normal 21px/28px 'Liberation Sans', sans-serif;color:#333333;white-space:nowrap;letter-spacing:0px">$20.00</div>
<div style="position:absolute;right:1536.5px;text-align:right;top:557.17px;font:normal 21px/28px 'Liberation Sans', sans-serif;color:#333333;white-space:nowrap;letter-spacing:0px">$11,320.00</div>
<div style="position:absolute;right:1417.5px;text-align:right;top:557.17px;font:normal 21px/28px 'Liberation Sans', sans-serif;color:#333333;white-space:nowrap;letter-spacing:0px">28</div>
<div style="position:absolute;right:1320px;text-align:right;top:557.17px;font:normal 21px/28px 'Liberation Sans', sans-serif;color:#333333;white-space:nowrap;letter-spacing:0px">0</div>
<div style="position:absolute;right:1194px;text-align:right;top:557.17px;font:normal 21px/28px 'Liberation Sans', sans-serif;color:#333333;white-space:nowrap;letter-spacing:0px">28</div>
<div style="position:absolute;right:1078.5px;text-align:right;top:557.17px;font:normal 21px/28px 'Liberation Sans', sans-serif;color:#333333;white-space:nowrap;letter-spacing:0px">$640.00</div>
<div style="position:absolute;left:1860px;top:557.17px;font:normal 21px/28px 'Liberation Sans', sans-serif;color:#333333;white-space:nowrap;letter-spacing:0px">12/13/2024</div>
<div style="position:absolute;right:875.5px;text-align:right;top:557.17px;font:normal 21px/28px 'Liberation Sans', sans-serif;color:#333333;white-space:nowrap;letter-spacing:0px">0</div>
<div style="position:absolute;right:734.5px;text-align:right;top:557.17px;font:normal 21px/28px 'Liberation Sans', sans-serif;color:#333333;white-space:nowrap;letter-spacing:0px">2</div>
<div style="position:absolute;right:607.5px;text-align:right;top:557.17px;font:normal 21px/28px 'Liberation Sans', sans-serif;color:#333333;white-space:nowrap;letter-spacing:0px">2</div>
<div style="position:absolute;right:482px;text-align:right;top:557.17px;font:normal 21px/28px 'Liberation Sans', sans-serif;color:#333333;white-space:nowrap;letter-spacing:0px">$40.13</div>
<div style="position:absolute;right:257px;text-align:right;top:557.17px;font:normal 21px/28px 'Liberation Sans', sans-serif;color:#333333;white-space:nowrap;letter-spacing:0px">592</div>
<div style="position:absolute;right:140px;text-align:right;top:557.17px;font:normal 21px/28px 'Liberation Sans', sans-serif;color:#333333;white-space:nowrap;letter-spacing:0px">$20.13</div>
<div style="position:absolute;right:13px;text-align:right;top:557.17px;font:normal 21px/28px 'Liberation Sans', sans-serif;color:#333333;white-space:nowrap;letter-spacing:0px">$11,919.87</div>
<div style="position:absolute;left:37.5px;top:621.17px;font:normal 21px/28px 'Liberation Sans', sans-serif;color:#333333;white-space:nowrap;letter-spacing:-1.1px">BLD200</div>
<div style="position:absolute;left:169.5px;top:621.17px;font:normal 21px/28px 'Liberation Sans', sans-serif;color:#333333;white-space:nowrap;letter-spacing:0px">San Francisco</div>
<div style="position:absolute;left:320px;top:621.17px;font:normal 21px/28px 'Liberation Sans', sans-serif;color:#333333;white-space:nowrap;letter-spacing:0px">Fan Blade</div>
<div style="position:absolute;left:482px;top:621.17px;font:normal 21px/28px 'Liberation Sans', sans-serif;color:#333333;white-space:nowrap;letter-spacing:0px">Industrial<br>Electronics</div>
<div style="position:absolute;left:597.5px;top:621.17px;font:normal 21px/28px 'Liberation Sans', sans-serif;color:#333333;white-space:nowrap;letter-spacing:0px">Production</div>
<div style="position:absolute;left:759.5px;top:621.17px;font:normal 21px/28px 'Liberation Sans', sans-serif;color:#333333;white-space:nowrap;letter-spacing:0.5px">Headquarters:United<br>States</div>
<div style="position:absolute;right:1818px;text-align:right;top:621.17px;font:normal 21px/28px 'Liberation Sans', sans-serif;color:#333333;white-space:nowrap;letter-spacing:0px">2,532</div>
<div style="position:absolute;right:1677.5px;text-align:right;top:621.17px;font:normal 21px/28px 'Liberation Sans', sans-serif;color:#333333;white-space:nowrap;letter-spacing:0px">$2.75</div>
<div style="position:absolute;right:1536.5px;text-align:right;top:621.17px;font:normal 21px/28px 'Liberation Sans', sans-serif;color:#333333;white-space:nowrap;letter-spacing:0px">$6,963.00</div>
<div style="position:absolute;right:1417.5px;text-align:right;top:621.17px;font:normal 21px/28px 'Liberation Sans', sans-serif;color:#333333;white-space:nowrap;letter-spacing:0px">3,082</div>
<div style="position:absolute;right:1320px;text-align:right;top:621.17px;font:normal 21px/28px 'Liberation Sans', sans-serif;color:#333333;white-space:nowrap;letter-spacing:0px">2,550</div>
<div style="position:absolute;right:1194px;text-align:right;top:621.17px;font:normal 21px/28px 'Liberation Sans', sans-serif;color:#333333;white-space:nowrap;letter-spacing:0px">5,632</div>
<div style="position:absolute;right:1078.5px;text-align:right;top:621.17px;font:normal 21px/28px 'Liberation Sans', sans-serif;color:#333333;white-space:nowrap;letter-spacing:0px">$15,488.00</div>
<div style="position:absolute;left:1860px;top:621.17px;font:normal 21px/28px 'Liberation Sans', sans-serif;color:#333333;white-space:nowrap;letter-spacing:0px">12/26/2024</div>
<div style="position:absolute;right:875.5px;text-align:right;top:621.17px;font:normal 21px/28px 'Liberation Sans', sans-serif;color:#333333;white-space:nowrap;letter-spacing:0px">0</div>
<div style="position:absolute;right:734.5px;text-align:right;top:621.17px;font:normal 21px/28px 'Liberation Sans', sans-serif;color:#333333;white-space:nowrap;letter-spacing:0px">3,000</div>
<div style="position:absolute;right:607.5px;text-align:right;top:621.17px;font:normal 21px/28px 'Liberation Sans', sans-serif;color:#333333;white-space:nowrap;letter-spacing:0px">3,000</div>
<div style="position:absolute;right:482px;text-align:right;top:621.17px;font:normal 21px/28px 'Liberation Sans', sans-serif;color:#333333;white-space:nowrap;letter-spacing:0px">$8,250.00</div>
<div style="position:absolute;right:257px;text-align:right;top:621.17px;font:normal 21px/28px 'Liberation Sans', sans-serif;color:#333333;white-space:nowrap;letter-spacing:0px">5,164</div>
<div style="position:absolute;right:140px;text-align:right;top:621.17px;font:normal 21px/28px 'Liberation Sans', sans-serif;color:#333333;white-space:nowrap;letter-spacing:0px">$2.75</div>
<div style="position:absolute;right:13px;text-align:right;top:621.17px;font:normal 21px/28px 'Liberation Sans', sans-serif;color:#333333;white-space:nowrap;letter-spacing:0px">$14,201.00</div>
<div style="position:absolute;left:37.5px;top:685.17px;font:normal 21px/28px 'Liberation Sans', sans-serif;color:#333333;white-space:nowrap;letter-spacing:-1.1px">BLD300</div>
<div style="position:absolute;left:169.5px;top:685.17px;font:normal 21px/28px 'Liberation Sans', sans-serif;color:#333333;white-space:nowrap;letter-spacing:0px">San Francisco</div>
<div style="position:absolute;left:320px;top:685.17px;font:normal 21px/28px 'Liberation Sans', sans-serif;color:#333333;white-space:nowrap;letter-spacing:0px">Fan Blade</div>
<div style="position:absolute;left:482px;top:685.17px;font:normal 21px/28px 'Liberation Sans', sans-serif;color:#333333;white-space:nowrap;letter-spacing:0px">Industrial<br>Electronics</div>
<div style="position:absolute;left:597.5px;top:685.17px;font:normal 21px/28px 'Liberation Sans', sans-serif;color:#333333;white-space:nowrap;letter-spacing:0px">Production</div>
<div style="position:absolute;left:759.5px;top:685.17px;font:normal 21px/28px 'Liberation Sans', sans-serif;color:#333333;white-space:nowrap;letter-spacing:0.5px">Headquarters:United<br>States</div>
<div style="position:absolute;right:1818px;text-align:right;top:685.17px;font:normal 21px/28px 'Liberation Sans', sans-serif;color:#333333;white-space:nowrap;letter-spacing:0px">100</div>
<div style="position:absolute;right:1677.5px;text-align:right;top:685.17px;font:normal 21px/28px 'Liberation Sans', sans-serif;color:#333333;white-space:nowrap;letter-spacing:0px">$2.75</div>
<div style="position:absolute;right:1536.5px;text-align:right;top:685.17px;font:normal 21px/28px 'Liberation Sans', sans-serif;color:#333333;white-space:nowrap;letter-spacing:0px">$275.00</div>
<div style="position:absolute;right:1417.5px;text-align:right;top:685.17px;font:normal 21px/28px 'Liberation Sans', sans-serif;color:#333333;white-space:nowrap;letter-spacing:0px">-15</div>
<div style="position:absolute;right:1320px;text-align:right;top:685.17px;font:normal 21px/28px 'Liberation Sans', sans-serif;color:#333333;white-space:nowrap;letter-spacing:0px">15</div>
<div style="position:absolute;right:1194px;text-align:right;top:685.17px;font:normal 21px/28px 'Liberation Sans', sans-serif;color:#333333;white-space:nowrap;letter-spacing:0px">0</div>
<div style="position:absolute;right:1078.5px;text-align:right;top:685.17px;font:normal 21px/28px 'Liberation Sans', sans-serif;color:#333333;white-space:nowrap;letter-spacing:0px">$0.00</div>
<div style="position:absolute;left:1860px;top:685.17px;font:normal 21px/28px 'Liberation Sans', sans-serif;color:#333333;white-space:nowrap;letter-spacing:0px">12/02/2024</div>
<div style="position:absolute;right:875.5px;text-align:right;top:685.17px;font:normal 21px/28px 'Liberation Sans', sans-serif;color:#333333;white-space:nowrap;letter-spacing:0px">0</div>
<div style="position:absolute;right:734.5px;text-align:right;top:685.17px;font:normal 21px/28px 'Liberation Sans', sans-serif;color:#333333;white-space:nowrap;letter-spacing:0px">15</div>
<div style="position:absolute;right:607.5px;text-align:right;top:685.17px;font:normal 21px/28px 'Liberation Sans', sans-serif;color:#333333;white-space:nowrap;letter-spacing:0px">15</div>
<div style="position:absolute;right:482px;text-align:right;top:685.17px;font:normal 21px/28px 'Liberation Sans', sans-serif;color:#333333;white-space:nowrap;letter-spacing:0px">$41.25</div>
<div style="position:absolute;right:257px;text-align:right;top:685.17px;font:normal 21px/28px 'Liberation Sans', sans-serif;color:#333333;white-space:nowrap;letter-spacing:0px">85</div>
<div style="position:absolute;right:140px;text-align:right;top:685.17px;font:normal 21px/28px 'Liberation Sans', sans-serif;color:#333333;white-space:nowrap;letter-spacing:0px">$2.75</div>
<div style="position:absolute;right:13px;text-align:right;top:685.17px;font:normal 21px/28px 'Liberation Sans', sans-serif;color:#333333;white-space:nowrap;letter-spacing:0px">$233.75</div>
<div style="position:absolute;left:169.5px;top:785.17px;font:normal 21px/28px 'Liberation Sans', sans-serif;color:#333333;white-space:nowrap;letter-spacing:0px">Boston</div>
<div style="position:absolute;left:320px;top:785.17px;font:normal 21px/28px 'Liberation Sans', sans-serif;color:#333333;white-space:nowrap;letter-spacing:0px">Assembly/Bill of<br>Materials Item</div>
<div style="position:absolute;left:482px;top:785.17px;font:normal 21px/28px 'Liberation Sans', sans-serif;color:#333333;white-space:nowrap;letter-spacing:0px">Industrial<br>Electronics</div>
<div style="position:absolute;left:597.5px;top:785.17px;font:normal 21px/28px 'Liberation Sans', sans-serif;color:#333333;white-space:nowrap;letter-spacing:0px">Production</div>
<div style="position:absolute;left:759.5px;top:785.17px;font:normal 21px/28px 'Liberation Sans', sans-serif;color:#333333;white-space:nowrap;letter-spacing:0.5px">Headquarters:United<br>States</div>
<div style="position:absolute;right:1818px;text-align:right;top:785.17px;font:normal 21px/28px 'Liberation Sans', sans-serif;color:#333333;white-space:nowrap;letter-spacing:0px">11</div>
<div style="position:absolute;right:1677.5px;text-align:right;top:785.17px;font:normal 21px/28px 'Liberation Sans', sans-serif;color:#333333;white-space:nowrap;letter-spacing:0px">$30.30</div>
<div style="position:absolute;right:1536.5px;text-align:right;top:785.17px;font:normal 21px/28px 'Liberation Sans', sans-serif;color:#333333;white-space:nowrap;letter-spacing:0px">$333.30</div>
<div style="position:absolute;right:1417.5px;text-align:right;top:785.17px;font:normal 21px/28px 'Liberation Sans', sans-serif;color:#333333;white-space:nowrap;letter-spacing:0px">0</div>
<div style="position:absolute;right:1320px;text-align:right;top:785.17px;font:normal 21px/28px 'Liberation Sans', sans-serif;color:#333333;white-space:nowrap;letter-spacing:0px">322</div>
<div style="position:absolute;right:1194px;text-align:right;top:785.17px;font:normal 21px/28px 'Liberation Sans', sans-serif;color:#333333;white-space:nowrap;letter-spacing:0px">322</div>
<div style="position:absolute;right:1078.5px;text-align:right;top:785.17px;font:normal 21px/28px 'Liberation Sans', sans-serif;color:#333333;white-space:nowrap;letter-spacing:0px">$9,756.60</div>
<div style="position:absolute;right:875.5px;text-align:right;top:785.17px;font:normal 21px/28px 'Liberation Sans', sans-serif;color:#333333;white-space:nowrap;letter-spacing:0px">0</div>
<div style="position:absolute;right:734.5px;text-align:right;top:785.17px;font:normal 21px/28px 'Liberation Sans', sans-serif;color:#333333;white-space:nowrap;letter-spacing:0px">0</div>
<div style="position:absolute;right:607.5px;text-align:right;top:785.17px;font:normal 21px/28px 'Liberation Sans', sans-serif;color:#333333;white-space:nowrap;letter-spacing:0px">0</div>
<div style="position:absolute;right:482px;text-align:right;top:785.17px;font:normal 21px/28px 'Liberation Sans', sans-serif;color:#333333;white-space:nowrap;letter-spacing:0px">$0.00</div>
<div style="position:absolute;right:257px;text-align:right;top:785.17px;font:normal 21px/28px 'Liberation Sans', sans-serif;color:#333333;white-space:nowrap;letter-spacing:0px">333</div>
<div style="position:absolute;right:140px;text-align:right;top:785.17px;font:normal 21px/28px 'Liberation Sans', sans-serif;color:#333333;white-space:nowrap;letter-spacing:0px">$30.30</div>
<div style="position:absolute;right:13px;text-align:right;top:785.17px;font:normal 21px/28px 'Liberation Sans', sans-serif;color:#333333;white-space:nowrap;letter-spacing:0px">$10,089.90</div>
<div style="position:absolute;left:169.5px;top:849.17px;font:normal 21px/28px 'Liberation Sans', sans-serif;color:#333333;white-space:nowrap;letter-spacing:0px">Toronto</div>
<div style="position:absolute;left:320px;top:849.17px;font:normal 21px/28px 'Liberation Sans', sans-serif;color:#333333;white-space:nowrap;letter-spacing:0px">Assembly/Bill of<br>Materials Item</div>
<div style="position:absolute;left:482px;top:849.17px;font:normal 21px/28px 'Liberation Sans', sans-serif;color:#333333;white-space:nowrap;letter-spacing:0px">Industrial<br>Electronics</div>
<div style="position:absolute;left:597.5px;top:849.17px;font:normal 21px/28px 'Liberation Sans', sans-serif;color:#333333;white-space:nowrap;letter-spacing:0px">Production</div>
<div style="position:absolute;left:759.5px;top:849.17px;font:normal 21px/28px 'Liberation Sans', sans-serif;color:#333333;white-space:nowrap;letter-spacing:0px">Headquarters:Canada</div>
<div style="position:absolute;right:1818px;text-align:right;top:849.17px;font:normal 21px/28px 'Liberation Sans', sans-serif;color:#333333;white-space:nowrap;letter-spacing:0px">751</div>
<div style="position:absolute;right:1677.5px;text-align:right;top:849.17px;font:normal 21px/28px 'Liberation Sans', sans-serif;color:#333333;white-space:nowrap;letter-spacing:0px">$60.00</div>
<div style="position:absolute;right:1536.5px;text-align:right;top:849.17px;font:normal 21px/28px 'Liberation Sans', sans-serif;color:#333333;white-space:nowrap;letter-spacing:0px">$45,060.00</div>
<div style="position:absolute;right:257px;text-align:right;top:849.17px;font:normal 21px/28px 'Liberation Sans', sans-serif;color:#333333;white-space:nowrap;letter-spacing:0px">751</div>
<div style="position:absolute;right:140px;text-align:right;top:849.17px;font:normal 21px/28px 'Liberation Sans', sans-serif;color:#333333;white-space:nowrap;letter-spacing:0px">$60.00</div>
<div style="position:absolute;right:13px;text-align:right;top:849.17px;font:normal 21px/28px 'Liberation Sans', sans-serif;color:#333333;white-space:nowrap;letter-spacing:0px">$45,060.00</div>
<div style="position:absolute;left:8px;top:16.5px;width:22px;height:21px;background:#a5a5a5;border-radius:2px"></div>
<div style="position:absolute;left:11.5px;top:25.5px;width:14.5px;height:4px;background:#fff"></div>
<div style="position:absolute;left:37.5px;top:16.67px;font:bold 21px/28px 'Liberation Sans', sans-serif;color:#000;white-space:nowrap;letter-spacing:-1.2px">ALE002L</div>
<div style="position:absolute;left:8px;top:749px;width:22px;height:21px;background:#a5a5a5;border-radius:2px"></div>
<div style="position:absolute;left:11.5px;top:758px;width:14.5px;height:4px;background:#fff"></div>
<div style="position:absolute;left:37.5px;top:749.17px;font:bold 21px/28px 'Liberation Sans', sans-serif;color:#000;white-space:nowrap;letter-spacing:0px">BOM100</div>
<div style="position:absolute;left:0;top:174.5px;width:2922px;height:0;border-top:1.5px dashed #c8c8c8"></div>
<div style="position:absolute;left:37.5px;top:182.17px;font:bold 21px/28px 'Liberation Sans', sans-serif;color:#000;white-space:nowrap;letter-spacing:0px">Total -<br><span style="letter-spacing:-1.2px">ALE002L</span></div>
<div style="position:absolute;right:1818px;text-align:right;top:182.17px;font:bold 21px/28px 'Liberation Sans', sans-serif;color:#000;white-space:nowrap;letter-spacing:0px">410.5418</div>
<div style="position:absolute;right:1536.5px;text-align:right;top:182.17px;font:bold 21px/28px 'Liberation Sans', sans-serif;color:#000;white-space:nowrap;letter-spacing:0px">$1,642.18</div>
<div style="position:absolute;right:1417.5px;text-align:right;top:182.17px;font:bold 21px/28px 'Liberation Sans', sans-serif;color:#000;white-space:nowrap;letter-spacing:0px">0</div>
<div style="position:absolute;right:1320px;text-align:right;top:182.17px;font:bold 21px/28px 'Liberation Sans', sans-serif;color:#000;white-space:nowrap;letter-spacing:0px">0</div>
<div style="position:absolute;right:1194px;text-align:right;top:182.17px;font:bold 21px/28px 'Liberation Sans', sans-serif;color:#000;white-space:nowrap;letter-spacing:0px">0</div>
<div style="position:absolute;right:1078.5px;text-align:right;top:182.17px;font:bold 21px/28px 'Liberation Sans', sans-serif;color:#000;white-space:nowrap;letter-spacing:0px">$0.00</div>
<div style="position:absolute;right:875.5px;text-align:right;top:182.17px;font:bold 21px/28px 'Liberation Sans', sans-serif;color:#000;white-space:nowrap;letter-spacing:0px">0</div>
<div style="position:absolute;right:734.5px;text-align:right;top:182.17px;font:bold 21px/28px 'Liberation Sans', sans-serif;color:#000;white-space:nowrap;letter-spacing:0px">5</div>
<div style="position:absolute;right:607.5px;text-align:right;top:182.17px;font:bold 21px/28px 'Liberation Sans', sans-serif;color:#000;white-space:nowrap;letter-spacing:0px">5</div>
<div style="position:absolute;right:482px;text-align:right;top:182.17px;font:bold 21px/28px 'Liberation Sans', sans-serif;color:#000;white-space:nowrap;letter-spacing:0px">$20.00</div>
<div style="position:absolute;right:257px;text-align:right;top:182.17px;font:bold 21px/28px 'Liberation Sans', sans-serif;color:#000;white-space:nowrap;letter-spacing:0px">405.5418</div>
<div style="position:absolute;right:13px;text-align:right;top:182.17px;font:bold 21px/28px 'Liberation Sans', sans-serif;color:#000;white-space:nowrap;letter-spacing:0px">$1,622.18</div>
</div>
<div style="position:absolute;left:321.2px;top:391px;width:8.1px;height:2px;background:#333;border-radius:1px"></div>
<div style="position:absolute;left:334.8px;top:391px;width:7.0px;height:2px;background:#333;border-radius:1px"></div>
<div style="position:absolute;left:344.6px;top:391px;width:2.1px;height:2px;background:#555;border-radius:1px"></div>
<div style="position:absolute;left:353px;top:391px;width:2.7px;height:2px;background:#999;border-radius:1px"></div>
<div style="position:absolute;left:358.4px;top:391px;width:8.4px;height:2px;background:#333;border-radius:1px"></div>
<div style="position:absolute;left:369.6px;top:391px;width:3.2px;height:2px;background:#999;border-radius:1px"></div>
<div style="position:absolute;left:375.3px;top:391px;width:2.4px;height:2px;background:#666;border-radius:1px"></div>
<div style="position:absolute;left:379px;top:391px;width:8.5px;height:2px;background:#333;border-radius:1px"></div>
<div style="position:absolute;left:391.3px;top:391px;width:7.6px;height:2px;background:#333;border-radius:1px"></div>
<div style="position:absolute;left:402.2px;top:391px;width:9.5px;height:2px;background:#444;border-radius:1px"></div>
<div style="position:absolute;left:0px;top:1292px;width:2995px;height:2px;background:#9a9fa5"></div>
<div style="position:absolute;left:2929px;top:391px;width:27.5px;height:901px;background:#f1f1f1"></div>
<div style="position:absolute;left:2937px;top:402px;width:0;height:0;border-left:5.7px solid transparent;border-right:5.7px solid transparent;border-bottom:6.5px solid #505050"></div>
<div style="position:absolute;left:2937px;top:1275px;width:0;height:0;border-left:5.7px solid transparent;border-right:5.7px solid transparent;border-top:6.5px solid #505050"></div>
<div style="position:absolute;left:2933px;top:478.5px;width:20px;height:26px;background:#c1c1c1"></div>
<div style="position:absolute;left:2956.5px;top:391px;width:38.5px;height:901px;background:#dedede;box-sizing:border-box;border-left:1.8px solid #a6a6a6;border-right:1.5px solid #c8c8c8"></div>
<div style="position:absolute;left:2958px;top:392px;width:35px;height:31.5px;background:#efefef;border-bottom:1px solid #d0d0d0"></div>
<div style="position:absolute;left:2959.5px;top:394.5px;width:26px;height:26px;border-radius:50%;background:#5d7594"></div>
<svg style="position:absolute;left:2959.5px;top:394.5px" width="26" height="26" viewBox="0 0 26 26"><path d="M15.5 6.5 L9 13 L15.5 19.5" fill="none" stroke="#fff" stroke-width="2.6"/></svg>
<div style="position:absolute;left:2958px;top:489px;width:35px;height:5px;background:#fafafa"></div>
<svg style="position:absolute;left:2954px;top:351px" width="30" height="30" viewBox="0 0 30 30"><circle cx="14.5" cy="15" r="12" fill="#fff" stroke="#3b7fd6" stroke-width="3.6"/><circle cx="14.5" cy="9.8" r="2" fill="#3b7fd6"/><rect x="12.8" y="13" width="3.6" height="8.5" fill="#3b7fd6"/></svg>
<div style="position:absolute;left:2876.5px;top:602px;width:69px;height:138px;border-radius:35px;background:#2f5570;box-shadow:0 2px 5px rgba(0,0,0,0.35)"></div>
<div style="position:absolute;left:2889px;top:614px;width:46px;height:46px;box-sizing:border-box;border-radius:50%;border:3.3px solid #dfe7ec"></div>
<div style="position:absolute;left:2904px;top:619px;font:italic bold 30px/34px 'Liberation Serif', serif;color:#e6ecf0">i</div>
<div style="position:absolute;left:2895.5px;top:677.5px;width:9.5px;height:9.5px;border-radius:50%;background:#7a93a6"></div>
<div style="position:absolute;left:2909.0px;top:677.5px;width:9.5px;height:9.5px;border-radius:50%;background:#7a93a6"></div>
<div style="position:absolute;left:2922.5px;top:677.5px;width:9.5px;height:9.5px;border-radius:50%;background:#7a93a6"></div>
<div style="position:absolute;left:2895.5px;top:691.0px;width:9.5px;height:9.5px;border-radius:50%;background:#7a93a6"></div>
<div style="position:absolute;left:2909.0px;top:691.0px;width:9.5px;height:9.5px;border-radius:50%;background:#7a93a6"></div>
<div style="position:absolute;left:2922.5px;top:691.0px;width:9.5px;height:9.5px;border-radius:50%;background:#7a93a6"></div>
<div style="position:absolute;left:2895.5px;top:704.5px;width:9.5px;height:9.5px;border-radius:50%;background:#7a93a6"></div>
<div style="position:absolute;left:2909.0px;top:704.5px;width:9.5px;height:9.5px;border-radius:50%;background:#7a93a6"></div>
<div style="position:absolute;left:2922.5px;top:704.5px;width:9.5px;height:9.5px;border-radius:50%;background:#7a93a6"></div>
<div style="position:absolute;left:0px;top:1294px;width:2995px;height:106px;background:#e1e5ed"></div>
<div style="position:absolute;left:0px;top:1399px;width:2995px;height:1.5px;background:#d3d8df"></div>
<div style="position:absolute;left:5px;top:1312.03px;font:normal 23.5px/31px 'Liberation Sans', sans-serif;color:#777;white-space:nowrap;letter-spacing:-0.8px">DATE</div>
<div style="position:absolute;left:392px;top:1312.03px;font:normal 23.5px/31px 'Liberation Sans', sans-serif;color:#777;white-space:nowrap;letter-spacing:-0.8px">FROM</div>
<div style="position:absolute;left:710px;top:1312.03px;font:normal 23.5px/31px 'Liberation Sans', sans-serif;color:#777;white-space:nowrap;letter-spacing:-0.6px">TO</div>
<div style="position:absolute;left:1017px;top:1312.03px;font:normal 23.5px/31px 'Liberation Sans', sans-serif;color:#777;white-space:nowrap;letter-spacing:-1.3px">SUBSIDIARY CONTEXT</div>
<div style="position:absolute;left:5px;top:1343px;width:349.5px;height:46.5px;box-sizing:border-box;background:#fff;border:1.5px solid #cfd4da"></div>
<div style="position:absolute;left:392px;top:1343px;width:226.5px;height:46.5px;box-sizing:border-box;background:#fff;border:1.5px solid #cfd4da"></div>
<div style="position:absolute;left:710px;top:1343px;width:225.5px;height:46.5px;box-sizing:border-box;background:#fff;border:1.5px solid #cfd4da"></div>
<div style="position:absolute;left:1017.5px;top:1343px;width:423.5px;height:46.5px;box-sizing:border-box;background:#fff;border:1.5px solid #cfd4da"></div>
<div style="position:absolute;left:12.5px;top:1349.55px;font:normal 26.5px/34px 'Liberation Sans', sans-serif;color:#222;white-space:nowrap;">(Custom)</div>
<div style="position:absolute;left:400.5px;top:1349.55px;font:normal 26.5px/34px 'Liberation Sans', sans-serif;color:#222;white-space:nowrap;">12/01/2024</div>
<div style="position:absolute;left:718px;top:1349.55px;font:normal 26.5px/34px 'Liberation Sans', sans-serif;color:#222;white-space:nowrap;">12/31/2024</div>
<div style="position:absolute;left:1031.5px;top:1349.05px;font:normal 26.5px/34px 'Liberation Sans', sans-serif;color:#222;white-space:nowrap;">Headquarters (Consolidated)</div>
<div style="position:absolute;left:1406px;top:1360px;width:0;height:0;border-left:11.5px solid transparent;border-right:11.5px solid transparent;border-top:13.5px solid #5a7190"></div>
<svg style="position:absolute;left:1482px;top:1336px" width="27" height="27" viewBox="0 0 27 27"><path d="M3 13 L13.5 4 L24 13" fill="none" stroke="#5a7190" stroke-width="4.2"/><path d="M3 24 L13.5 15 L24 24" fill="none" stroke="#5a7190" stroke-width="4.2"/></svg>
<div style="position:absolute;left:1520px;top:1335.50px;font:normal 20.5px/27px 'Liberation Sans', sans-serif;color:#777;white-space:nowrap;letter-spacing:-2.2px">MORE</div>
<div style="position:absolute;left:2534px;top:1345px;width:324.5px;height:47px;box-sizing:border-box;background:#fff;border:1.5px solid #cfd4da"></div>
<div style="position:absolute;left:2541px;top:1350.55px;font:normal 26.5px/34px 'Liberation Sans', sans-serif;color:#333;white-space:nowrap;">Find...</div>
<div style="position:absolute;left:2887px;top:1345px;width:41px;height:40px;box-sizing:border-box;background:#fff;border:1.5px solid #d5d9de;border-radius:4px"></div>
<div style="position:absolute;left:2946px;top:1345px;width:40px;height:40px;box-sizing:border-box;background:#fff;border:1.5px solid #d5d9de;border-radius:4px"></div>
<svg style="position:absolute;left:2887px;top:1345px" width="41" height="40" viewBox="0 0 41 40"><path d="M24 11 L16.5 20 L24 29" fill="none" stroke="#24478f" stroke-width="4.2"/></svg>
<svg style="position:absolute;left:2946px;top:1345px" width="40" height="40" viewBox="0 0 40 40"><path d="M17 11 L24.5 20 L17 29" fill="none" stroke="#24478f" stroke-width="4.2"/></svg>
<div style="position:absolute;left:25px;top:1411px;width:127.5px;height:54px;background:#125ff5;border-radius:4px"></div>
<div style="position:absolute;left:43px;top:1420.22px;font:normal 27px/35px 'Liberation Sans', sans-serif;color:#fff;white-space:nowrap;-webkit-text-stroke:0.8px #fff;letter-spacing:0.2px">Refresh</div>
<div style="position:absolute;left:206.5px;top:1411px;width:161px;height:53.5px;box-sizing:border-box;background:#e6e6e6;border:1.5px solid #cdcdcd;border-radius:3px"></div>
<div style="position:absolute;left:223.5px;top:1420.22px;font:normal 27px/35px 'Liberation Sans', sans-serif;color:#333;white-space:nowrap;-webkit-text-stroke:0.8px #333;letter-spacing:0px">Customize</div>
<svg style="position:absolute;left:2148px;top:1421px" width="64" height="34" viewBox="0 0 64 34">
<line x1="12" y1="12" x2="29" y2="28.5" stroke="#5e5e5e" stroke-width="6.5" stroke-linecap="round"/>
<circle cx="10.5" cy="10.5" r="8.3" fill="#5e5e5e"/>
<path d="M1 7 L7 1 L12 6 L6 12 Z" fill="#fff"/>
<path d="M46 13 H61 L53.5 22 Z" fill="#5e5e5e"/>
</svg>
<div style="position:absolute;left:2218px;top:1422px;width:1.5px;height:32px;background:#d6d6d6"></div>
<svg style="position:absolute;left:2232px;top:1421px" width="58" height="36" viewBox="0 0 58 36">
<circle cx="11.4" cy="5.8" r="4.7" fill="#5e5e5e"/>
<rect x="21" y="3.7" width="33.3" height="4.8" rx="2" fill="#5e5e5e"/>
<path d="M11.4 13.2 L20.3 22.7 H16.2 V32.2 H6.7 V22.7 H2.6 Z" fill="#5e5e5e"/>
</svg>
<svg style="position:absolute;left:2315px;top:1421px" width="58" height="36" viewBox="0 0 58 36">
<circle cx="10" cy="5.8" r="4.7" fill="#5e5e5e"/>
<path d="M5.2 13.2 H14.7 V23.4 H18.8 L10 32.2 L1.1 23.4 H5.2 Z" fill="#5e5e5e"/>
<rect x="19.5" y="3.7" width="34.6" height="4.8" rx="2" fill="#5e5e5e"/>
<rect x="21.5" y="11.8" width="22.4" height="2.9" rx="1.2" fill="#5e5e5e"/>
<rect x="21.5" y="17.3" width="29.9" height="3.4" rx="1.5" fill="#5e5e5e"/>
<rect x="21.5" y="22.7" width="25.8" height="3.4" rx="1.5" fill="#5e5e5e"/>
</svg>
<div style="position:absolute;left:2386px;top:1422px;width:1.5px;height:32px;background:#d6d6d6"></div>
<svg style="position:absolute;left:2401px;top:1421px" width="58" height="36" viewBox="0 0 58 36">
<rect x="0.7" y="1.8" width="54.5" height="1" fill="#ddd"/><rect x="0.7" y="11.4" width="54.5" height="1" fill="#ddd"/><rect x="0.7" y="20.9" width="54.5" height="1" fill="#ddd"/><rect x="0.7" y="30.4" width="54.5" height="1" fill="#ddd"/>
<rect x="6.9" y="20.7" width="11.5" height="11.5" fill="#5e5e5e"/>
<rect x="23.2" y="9.1" width="10.8" height="23.1" fill="#5e5e5e"/>
<rect x="38.8" y="1.7" width="10.9" height="30.5" fill="#5e5e5e"/>
</svg>
<div style="position:absolute;left:2472px;top:1422px;width:1.5px;height:32px;background:#d6d6d6"></div>
<svg style="position:absolute;left:2504px;top:1421px" width="40" height="38" viewBox="0 0 40 38">
<path d="M9 2 H27 L34 9 V36 H9 Z" fill="#5b8ad6"/><path d="M27 2 V9 H34 Z" fill="#a9c4ee"/>
<rect x="1" y="17" width="19" height="19" fill="#6cb33f"/>
<path d="M5 21 L16 33 M16 21 L5 33" stroke="#fff" stroke-width="3"/>
</svg>
<svg style="position:absolute;left:2571px;top:1421px" width="34" height="38" viewBox="0 0 34 38">
<path d="M1 2 H21 L31 12 V36 H1 Z" fill="#ee3b2b"/><path d="M21 2 V12 H31 Z" fill="#f6a39b"/>
<path d="M7 30 C11 24 14 16 14 10 C14 7 12 8 12.5 11 C13 16 19 24 26 25 C28 25 28 23 25 23 C19 23 11 27 7 30 Z" fill="none" stroke="#fff" stroke-width="2.2"/>
</svg>
<svg style="position:absolute;left:2642px;top:1421px" width="30" height="38" viewBox="0 0 30 38">
<path d="M2 2 H19 L28 11 V36 H2 Z" fill="#eef3fb" stroke="#5b8ad6" stroke-width="2.4"/><path d="M19 2 V11 H28" fill="#cfdcf3" stroke="#5b8ad6" stroke-width="2"/>
<rect x="7" y="17" width="16" height="2" fill="#8aa9df"/><rect x="7" y="22" width="16" height="2" fill="#8aa9df"/><rect x="7" y="27" width="16" height="2" fill="#8aa9df"/>
</svg>
<svg style="position:absolute;left:2709px;top:1421px" width="38" height="38" viewBox="0 0 38 38">
<path d="M9 2 H27 L35 10 V36 H9 Z" fill="#5b8ad6"/><path d="M27 2 V10 H35 Z" fill="#a9c4ee"/>
<rect x="1" y="17" width="19" height="19" fill="#3f6fc4"/>
<path d="M4 21 L7 33 L10.5 25 L14 33 L17 21" fill="none" stroke="#fff" stroke-width="2.2"/>
</svg>
<div style="position:absolute;left:2777px;top:1422px;width:1.5px;height:32px;background:#d6d6d6"></div>
<svg style="position:absolute;left:2809px;top:1421px" width="40" height="38" viewBox="0 0 40 38">
<path d="M9 2 H27 L31 6 V12 H9 Z" fill="#24508f"/>
<rect x="1" y="12" width="38" height="16" rx="3" fill="#24508f"/>
<rect x="9" y="22" width="22" height="15" fill="#fff" stroke="#24508f" stroke-width="2.6"/>
<rect x="12" y="26" width="16" height="2" fill="#24508f"/><rect x="12" y="31" width="16" height="2" fill="#24508f"/>
</svg>
<svg style="position:absolute;left:2879px;top:1426px" width="38" height="30" viewBox="0 0 38 30">
<rect x="2" y="2" width="33" height="24" fill="none" stroke="#24508f" stroke-width="3.2"/>
<path d="M2 3 L18.5 16 L35 3" fill="none" stroke="#24508f" stroke-width="3.2"/>
</svg>
<svg style="position:absolute;left:2946px;top:1421px" width="42" height="40" viewBox="0 0 42 40">
<rect x="2" y="3" width="30" height="25" fill="none" stroke="#24508f" stroke-width="2.6"/>
<rect x="2" y="3" width="30" height="6" fill="#24508f"/>
<rect x="6" y="12" width="4" height="3" fill="#24508f"/><rect x="13" y="12" width="4" height="3" fill="#24508f"/><rect x="20" y="12" width="4" height="3" fill="#24508f"/>
<rect x="6" y="18" width="4" height="3" fill="#24508f"/><rect x="13" y="18" width="4" height="3" fill="#24508f"/>
<circle cx="30" cy="28" r="9.5" fill="#fff" stroke="#24508f" stroke-width="2.6"/>
<path d="M30 22 V28.5 H35" fill="none" stroke="#24508f" stroke-width="2.2"/>
</svg></body></html>
